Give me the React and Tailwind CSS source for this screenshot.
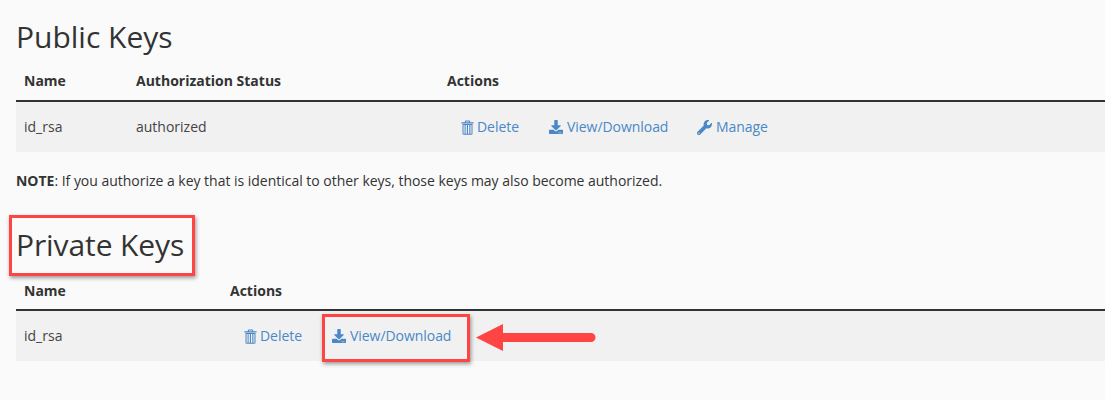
import { FaDownload, FaWrench } from "react-icons/fa"

const TrashIcon = () => (
  <svg width="13" height="15" viewBox="0 0 13 15" fill="currentColor" className="mr-[3px] shrink-0 ml-[1px]">
    <path d="M4.4 0.6h4.2l0.8 1.7H12.6v1.1H0.4V2.3h3.2zM5.1 1.4l-0.3 0.9h3.4l-0.3-0.9z" />
    <path d="M1.5 4h10v9.6c0 0.8-0.5 1.2-1.1 1.2H2.6c-0.6 0-1.1-0.4-1.1-1.2zM2.5 5v8.8h1.1V5zM4.6 5v8.8h1.3V5zM7 5v8.8h1.3V5zM9.4 5v8.8h1.1V5z" fillRule="evenodd" />
  </svg>
)

const ActionLink = ({ icon, label, className }) => (
  <a href="#" className={`flex items-center text-[#4a88c7] tracking-[-0.05px] ${className}`}>
    {icon}
    {label}
  </a>
)

const Actions = ({ manage }) => (
  <div className="flex items-center pl-[13px]">
    <ActionLink icon={<TrashIcon />} label="Delete" className="w-[89px]" />
    <ActionLink icon={<FaDownload size={14} className="mr-[4px]" />} label="View/Download" className="w-[148px]" />
    {manage && <ActionLink icon={<FaWrench size={15} className="mr-[4px]" />} label="Manage" />}
  </div>
)

const KeyTable = ({ columns, headers, row, manage, headHeight }) => (
  <div className={`grid ${columns}`}>
    {headers.map((h) => (
      <div key={h} className={`${headHeight} px-2 font-bold text-[#333] border-b-2 border-[#333]`}>{h}</div>
    ))}
    {row.map((cell) => (
      <div key={cell} className="h-[50px] px-2 flex items-center bg-[#f1f1f1] text-[#444]">{cell}</div>
    ))}
    <div className="h-[50px] px-2 flex items-center bg-[#f1f1f1]">
      <Actions manage={manage} />
    </div>
  </div>
)

export default function App() {
  return (
    <div className="relative h-[400px] overflow-hidden bg-[#fafafa] pl-4 text-[14px] leading-[20px] text-[#333]" style={{ fontFamily: '"Open Sans", sans-serif' }}>
      <h1 className="pt-[16px] h-[71px] text-[30px] leading-[42px] text-[#333]">Public Keys</h1>
      <KeyTable
        columns="grid-cols-[112px_311px_1fr]"
        headers={["Name", "Authorization Status", "Actions"]}
        row={["id_rsa", "authorized"]}
        headHeight="h-[31px]"
        manage
      />
      <p className="mt-[19px] text-[#333] tracking-[-0.02px]"><strong>NOTE</strong>: If you authorize a key that is identical to other keys, those keys may also become authorized.</p>
      <h1 className="mt-[33px] h-[57px] text-[30px] leading-[42px] tracking-[-0.1px] text-[#333]">Private Keys</h1>
      <KeyTable
        columns="grid-cols-[206px_1fr]"
        headers={["Name", "Actions"]}
        row={["id_rsa"]}
        headHeight="h-[30px]"
      />

      {/* annotations */}
      <div className="absolute left-[9px] top-[215px] w-[186px] h-[61px] border-[3px] border-[#ff4444] shadow-[1px_2px_4px_rgba(0,0,0,0.4)]" />
      <div className="absolute left-[322px] top-[314px] w-[148px] h-[48px] border-[3px] border-[#ff4444] shadow-[1px_2px_4px_rgba(0,0,0,0.4)]" />
      <svg className="absolute left-[476px] top-[324px]" width="120" height="28" viewBox="0 0 120 28">
        <path d="M0 13.5L27 0V9H115a4.5 4.5 0 0 1 0 9H27V27z" fill="#ff4444" />
      </svg>
    </div>
  )
}
